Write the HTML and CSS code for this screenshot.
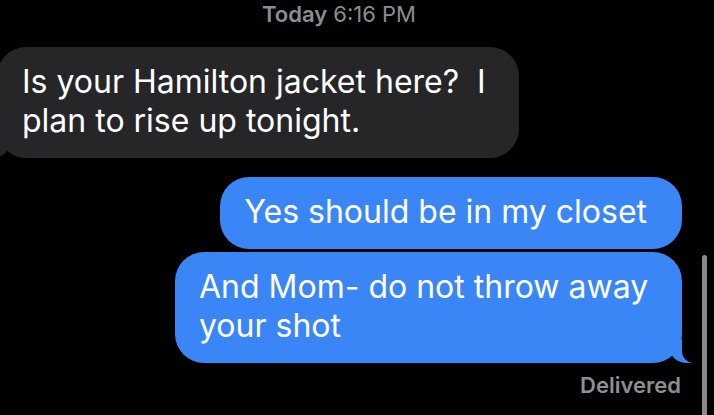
FILE: index.html
```html
<!DOCTYPE html>
<html lang="en">

<head>
    <meta charset="UTF-8">
    <meta name="viewport" content="width=device-width, initial-scale=1.0">
    <title>Messages</title>
    <link rel="stylesheet" href="styles.css">
</head>

<body>
    <div class="thread">
        <div class="stamp"><b>Today</b> 6:16 PM</div>

        <div class="msg received tail">Is your Hamilton jacket here?&nbsp; I plan to rise up tonight.</div>

        <div class="msg sent">Yes should be in my closet</div>
        <div class="msg sent tail">And Mom- do not throw away your shot</div>

        <div class="status">Delivered</div>
    </div>

    <!-- scroll indicator sits over the thread -->
    <div class="scrollbar"></div>
</body>

</html>
```

FILE: styles.css
```css
body {
    background-color: #000;
    color: #fff;
    font-family: Inter, "Noto Sans", sans-serif;
    margin: 0;
    padding: 0;
    height: 415px;
    overflow: hidden;
    position: relative;
}

.thread {
    display: flex;
    flex-direction: column;
    padding: 2px 32px 0 0;
}

.stamp {
    color: #8d8d92;
    font-size: 22px;
    line-height: 25px;
    text-align: center;
    padding-right: 4px;
    margin-bottom: 20px;
}

.stamp b {
    font-weight: 600;
}

.msg {
    position: relative;
    font-size: 32px;
    line-height: 39px;
    padding: 15px 35px 18px 24px;
    border-radius: 29px;
    box-sizing: border-box;
}

.received {
    align-self: flex-start;
    background-color: #262629;
    margin-left: -3px;
    padding-left: 25px;
    padding-right: 24px;
    max-width: 522px;
    margin-bottom: 19px;
}

.sent {
    align-self: flex-end;
    background-color: #3a86f7;
    max-width: 512px;
    margin-bottom: 3px;
}

.sent.tail {
    padding-right: 30px;
    max-width: 507px;
}

/* bubble tails */
.sent.tail::before {
    content: "";
    position: absolute;
    bottom: 0;
    right: -11px;
    width: 24px;
    height: 24px;
    background-color: #3a86f7;
    border-bottom-left-radius: 18px 16px;
}

.sent.tail::after {
    content: "";
    position: absolute;
    bottom: 0;
    right: -30px;
    width: 30px;
    height: 24px;
    background-color: #000;
    border-bottom-left-radius: 12px;
}

.received.tail::before {
    content: "";
    position: absolute;
    bottom: 0;
    left: -11px;
    width: 24px;
    height: 24px;
    background-color: #262629;
    border-bottom-right-radius: 18px 16px;
}

.received.tail::after {
    content: "";
    position: absolute;
    bottom: 0;
    left: -30px;
    width: 30px;
    height: 24px;
    background-color: #000;
    border-bottom-right-radius: 12px;
}

.status {
    align-self: flex-end;
    color: #8e8e93;
    font-size: 22px;
    font-weight: 600;
    line-height: 24px;
    margin-top: 7px;
    margin-right: 1px;
}

.scrollbar {
    position: absolute;
    left: 702px;
    top: 255px;
    width: 5px;
    height: 170px;
    border-radius: 3px;
    background-color: #8a8a8a;
}
```
